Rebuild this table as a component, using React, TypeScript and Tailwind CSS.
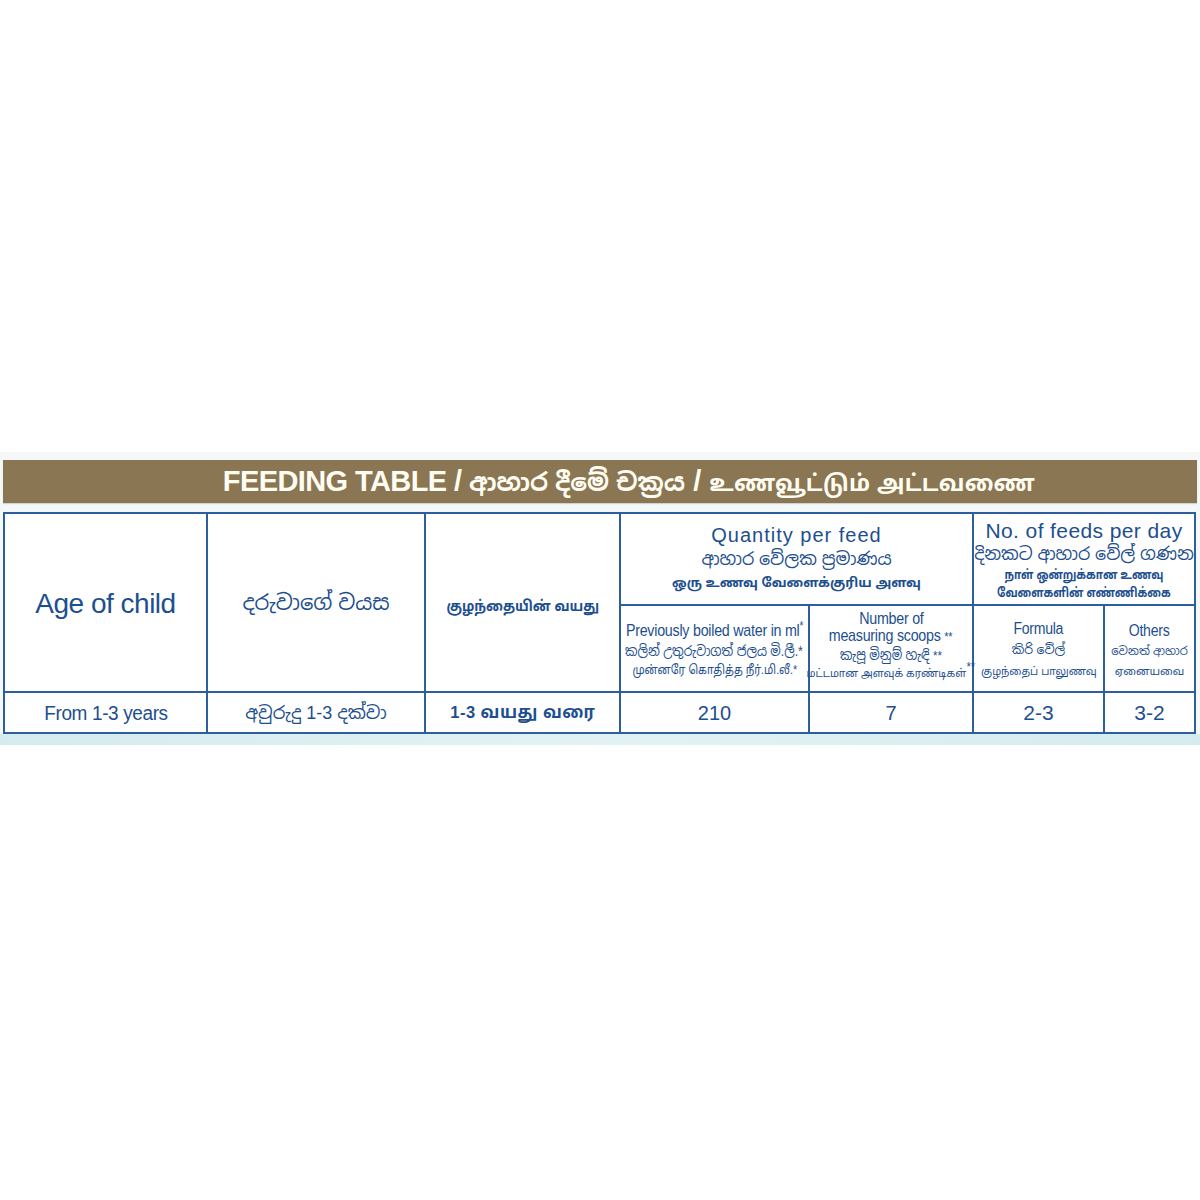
import React from "react";

const sans = "font-['Liberation_Sans','Noto_Sans_Sinhala','Noto_Sans_Tamil','Noto_Sans',sans-serif]";

function Cell({ className = "", children }: { className?: string; children?: React.ReactNode }) {
  return (
    <div className={`bg-white flex flex-col items-center justify-center text-center text-[#1d4f8f] whitespace-nowrap ${className}`}>
      {children}
    </div>
  );
}

export default function App() {
  return (
    <div className={`w-[1200px] h-[1200px] bg-white ${sans}`}>
      <div className="h-[452px]" />
      <div className="bg-[#f4f8f9] pt-[8px] px-[3px]">
        <div className="h-[43px] bg-[#8a7652] flex items-center justify-center shadow-[0_1px_1px_rgba(0,0,0,0.15)]">
          <span className="text-[#fffdf2] font-bold leading-none ml-[58px] whitespace-nowrap">
            <span className="text-[29px] tracking-[-0.6px]">FEEDING TABLE / </span>
            <span className="text-[25px]">ආහාර දීමේ චක්‍රය</span>
            <span className="text-[29px]"> / </span>
            <span className="text-[22.5px] tracking-[0.3px]">உணவூட்டும் அட்டவணை</span>
          </span>
        </div>
        <div className="h-[9px]" />
        <div className="w-[1193px] grid grid-cols-[201px_216px_193px_187px_162px_129px_89px] grid-rows-[90px_85px_39px] gap-[2px] p-[2px] bg-[#2d5f9f]">
          <Cell className="row-span-2">
            <span className="text-[28px] leading-none tracking-[-0.5px] mt-[2px]">Age of child</span>
          </Cell>
          <Cell className="row-span-2">
            <span className="text-[21px] leading-none">දරුවාගේ වයස</span>
          </Cell>
          <Cell className="row-span-2">
            <span className="text-[15px] font-bold leading-none mt-[6px] inline-block scale-x-[0.88]">குழந்தையின் வயது</span>
          </Cell>
          <Cell className="col-span-2 justify-start pt-[10px]">
            <span className="text-[20px] font-medium tracking-[1px] leading-[22px]">Quantity per feed</span>
            <span className="text-[17.5px] leading-[27px]">ආහාර වේලක ප්‍රමාණය</span>
            <span className="text-[13px] font-bold leading-[20px]">ஒரு உணவு வேளைக்குரிய அளவு</span>
          </Cell>
          <Cell className="col-span-2 justify-start pt-[5px]">
            <span className="text-[21px] tracking-[0.4px] leading-[24px]">No. of feeds per day</span>
            <span className="text-[17.5px] leading-[23px]">දිනකට ආහාර වේල් ගණන</span>
            <span className="text-[13px] font-bold leading-[18px] inline-block scale-x-[0.82]">நாள் ஒன்றுக்கான உணவு</span>
            <span className="text-[13px] font-bold leading-[18px] inline-block scale-x-[0.82]">வேளைகளின் எண்ணிக்கை</span>
          </Cell>
          <Cell className="pt-[3px]">
            <span className="text-[17px] leading-[20px] tracking-[-0.3px] inline-block scale-x-[0.84]">Previously boiled water in ml<sup className="text-[12px]">*</sup></span>
            <span className="text-[14px] leading-[20px] inline-block scale-x-[0.88]">කලින් උතුරුවාගත් ජලය මි.ලී.*</span>
            <span className="text-[12.5px] leading-[19px] inline-block scale-x-[0.86]">முன்னரே கொதித்த நீர்.மி.லீ.*</span>
          </Cell>
          <Cell className="pb-[6px]">
            <span className="text-[17px] leading-[17px] tracking-[-0.3px] inline-block scale-x-[0.84]">Number of</span>
            <span className="text-[17px] leading-[17px] tracking-[-0.3px] inline-block scale-x-[0.84]">measuring scoops <span className="text-[13px]">**</span></span>
            <span className="text-[14px] leading-[20px] inline-block scale-x-[0.88]">කැපූ මිනුම් හැඳි <span className="text-[13px]">**</span></span>
            <span className="text-[11px] leading-[15px] inline-block scale-x-[0.95]">மட்டமான அளவுக் கரண்டிகள்<sup className="text-[12px]">**</sup></span>
          </Cell>
          <Cell className="justify-start pt-[13px]">
            <span className="text-[16px] leading-[20px] tracking-[-0.3px] inline-block scale-x-[0.88]">Formula</span>
            <span className="text-[12.5px] leading-[22px]">කිරි වේල්</span>
            <span className="text-[11px] leading-[20px] inline-block scale-x-[0.95]">குழந்தைப் பாலுணவு</span>
          </Cell>
          <Cell className="justify-start pt-[15px]">
            <span className="text-[16px] leading-[20px] tracking-[-0.3px] inline-block scale-x-[0.88]">Others</span>
            <span className="text-[11.5px] leading-[20px]">වෙනත් ආහාර</span>
            <span className="text-[11px] leading-[20px]">ஏனையவை</span>
          </Cell>
          <Cell>
            <span className="text-[20px] leading-none tracking-[-0.4px] inline-block scale-x-[0.95]">From 1-3 years</span>
          </Cell>
          <Cell>
            <span className="text-[18px] leading-none">අවුරුදු 1-3 දක්වා</span>
          </Cell>
          <Cell>
            <span className="text-[17px] font-bold leading-none tracking-[0.5px] inline-block scale-x-[0.97]">1-3 வயது வரை</span>
          </Cell>
          <Cell>
            <span className="text-[20px] leading-none">210</span>
          </Cell>
          <Cell>
            <span className="text-[20px] leading-none">7</span>
          </Cell>
          <Cell>
            <span className="text-[21px] leading-none">2-3</span>
          </Cell>
          <Cell>
            <span className="text-[21px] leading-none">3-2</span>
          </Cell>
        </div>
        <div className="h-[11px] -mx-[3px] bg-gradient-to-r from-[#d4ecef] via-[#e2f2f4] to-[#d4ecef]" />
      </div>
    </div>
  );
}
